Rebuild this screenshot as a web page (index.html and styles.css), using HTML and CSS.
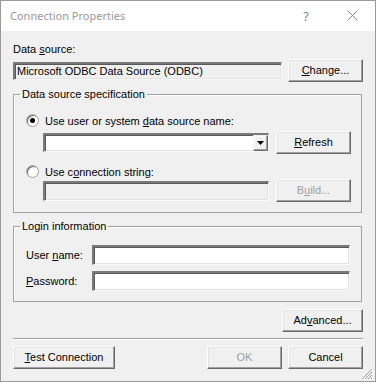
FILE: index.html
```html
<!DOCTYPE html>
<html lang="en">
<head>
	<meta charset="UTF-8">
	<title>Connection Properties</title>
	<link rel="stylesheet" href="styles.css">
</head>
<body>
	<div class="dialog">
		<div class="titlebar">
			<span class="title">Connection Properties</span>
			<span class="help">?</span>
			<svg class="close" width="11" height="11" viewBox="0 0 11 11">
				<path d="M0.5 0.5 L10.5 10.5 M10.5 0.5 L0.5 10.5" stroke="#8a8a8a" stroke-width="1" fill="none"/>
			</svg>
		</div>
		<div class="content">
			<div class="label">Data <u>s</u>ource:</div>
			<div class="row source-row">
				<div class="field readonly source-field">Microsoft ODBC Data Source (ODBC)</div>
				<button class="btn change-btn"><u>C</u>hange...</button>
			</div>

			<fieldset class="group spec">
				<legend>Data source specification</legend>
				<div class="radio-row">
					<span class="radio checked"></span>
					<span>Use user or system <u>d</u>ata source name:</span>
				</div>
				<div class="row sub-row first">
					<div class="field combo">
						<span class="combo-btn">
							<svg width="7" height="4" viewBox="0 0 7 4"><path d="M0 0 H7 L3.5 4 Z" fill="#000"/></svg>
						</span>
					</div>
					<button class="btn side-btn"><u>R</u>efresh</button>
				</div>
				<div class="radio-row second">
					<span class="radio"></span>
					<span>Use c<u>o</u>nnection string:</span>
				</div>
				<div class="row sub-row">
					<div class="field readonly conn-field"></div>
					<button class="btn side-btn disabled">B<u>u</u>ild...</button>
				</div>
			</fieldset>

			<fieldset class="group login">
				<legend>Login information</legend>
				<div class="login-row">
					<span class="login-label">User <u>n</u>ame:</span>
					<div class="field login-field"></div>
				</div>
				<div class="login-row">
					<span class="login-label"><u>P</u>assword:</span>
					<div class="field login-field"></div>
				</div>
			</fieldset>

			<div class="advanced-row">
				<button class="btn advanced-btn">Ad<u>v</u>anced...</button>
			</div>
			<div class="separator"></div>
			<div class="footer">
				<button class="btn test-btn"><u>T</u>est Connection</button>
				<div class="footer-right">
					<button class="btn std-btn disabled">OK</button>
					<button class="btn std-btn">Cancel</button>
				</div>
			</div>
		</div>
		<svg class="grip" width="12" height="12" viewBox="0 0 12 12">
			<path d="M11 1 L1 11 M11 4 L4 11 M11 7 L7 11 M11 10 L10 11" stroke="#a0a0a0" stroke-width="1" fill="none"/>
		</svg>
	</div>
</body>
</html>
```

FILE: styles.css
```css
*{
	margin: 0;
	padding: 0;
	box-sizing: border-box;
}
body{
	background: #6b6b6b;
	font-family: "Liberation Sans", Arial, sans-serif;
	font-size: 11px;
	color: #000;
}
.dialog{
	width: 376px;
	height: 382px;
	border: 1px solid #9a9a9a;
	background: #f0f0f0;
	position: relative;
	display: flex;
	flex-direction: column;
}
.titlebar{
	height: 30px;
	background: #fff;
	display: flex;
	align-items: center;
	padding-left: 9px;
	flex-shrink: 0;
}
.title{
	font-family: "Noto Sans", "Open Sans", sans-serif;
	font-size: 11px;
	color: #999;
	flex: 1;
	margin-top: -1px;
}
.help{
	font-family: "Noto Sans", sans-serif;
	font-size: 13px;
	color: #8a8a8a;
	margin-right: 38px;
	margin-top: -1px;
}
.close{
	margin-right: 17px;
	margin-top: -1px;
}
.content{
	padding: 12px 12px 0 12px;
	display: flex;
	flex-direction: column;
}
.label{
	line-height: 13px;
}
.row{
	display: flex;
	align-items: center;
	justify-content: space-between;
}
.source-row{
	margin-top: 3px;
	height: 23px;
}
.field{
	background: #fff;
	border-style: solid;
	border-width: 2px 1px 1px 2px;
	border-color: #7a7a7a #f8f8f8 #f8f8f8 #7a7a7a;
	box-shadow: inset 1px 1px 0 #5a5a5a, inset -1px -1px 0 #e3e3e3;
	line-height: 13px;
}
.readonly{
	background: #f0f0f0;
}
.source-field{
	width: 269px;
	height: 18px;
	margin-top: 1px;
	padding-left: 2px;
	padding-top: 1px;
}
.btn{
	font-family: "Liberation Sans", Arial, sans-serif;
	font-size: 11px;
	height: 23px;
	background: #f0f0f0;
	border: 1px solid;
	border-color: #fff #696969 #696969 #fff;
	box-shadow: inset -1px -1px 0 #a0a0a0, inset 1px 1px 0 #e3e3e3;
	color: #000;
	text-align: center;
	line-height: 13px;
}
.btn.disabled{
	color: #a0a0a0;
}
.change-btn{
	width: 75px;
}
.group{
	border: 1px solid #a0a0a0;
	box-shadow: 1px 1px 0 #fff inset;
	min-width: 0;
}
.group legend{
	padding: 0 2px;
	margin-left: -6px;
	line-height: 13px;
}
.spec{
	width: 349px;
	margin-top: 6px;
	padding: 0 10px 10px 12px;
}
.radio-row{
	display: flex;
	align-items: center;
	height: 13px;
	margin-top: 13px;
}
.radio-row.second{
	margin-top: 11px;
}
.radio{
	width: 13px;
	height: 13px;
	border-radius: 50%;
	background: #fff;
	border: 1px solid #a0a0a0;
	box-shadow: inset 1px 1px 0 #696969;
	margin-right: 6px;
	position: relative;
}
.radio.checked::after{
	content: "";
	position: absolute;
	left: 3px;
	top: 3px;
	width: 5px;
	height: 5px;
	border-radius: 50%;
	background: #000;
}
.sub-row{
	height: 23px;
	margin-top: 1px;
	padding-left: 17px;
}
.sub-row.first{
	margin-top: 4px;
}
.combo{
	width: 226px;
	height: 19px;
	display: flex;
	justify-content: flex-end;
	align-items: stretch;
}
.combo-btn{
	width: 15px;
	background: #f0f0f0;
	border: 1px solid;
	border-color: #f0f0f0 #696969 #696969 #f0f0f0;
	box-shadow: inset -1px -1px 0 #a0a0a0, inset 1px 1px 0 #fff;
	display: flex;
	align-items: center;
	justify-content: center;
}
.conn-field{
	width: 226px;
	height: 20px;
}
.side-btn{
	width: 75px;
}
.login{
	width: 349px;
	margin-top: 7px;
	padding: 0 11px 10px 12px;
}
.login-row{
	display: flex;
	align-items: center;
	height: 20px;
	margin-top: 6px;
}
.login-row:first-of-type{
	margin-top: 12px;
}
.login-label{
	width: 66px;
}
.login-field{
	width: 258px;
	height: 20px;
}
.advanced-row{
	display: flex;
	justify-content: flex-end;
	margin-top: 7px;
}
.advanced-btn{
	width: 81px;
}
.separator{
	margin-top: 6px;
	height: 2px;
	border-top: 1px solid #a0a0a0;
	border-bottom: 1px solid #fff;
}
.footer{
	display: flex;
	justify-content: space-between;
	margin-top: 6px;
}
.test-btn{
	width: 102px;
}
.footer-right{
	display: flex;
	gap: 6px;
}
.std-btn{
	width: 75px;
}
.grip{
	position: absolute;
	right: 2px;
	bottom: 1px;
}
```
